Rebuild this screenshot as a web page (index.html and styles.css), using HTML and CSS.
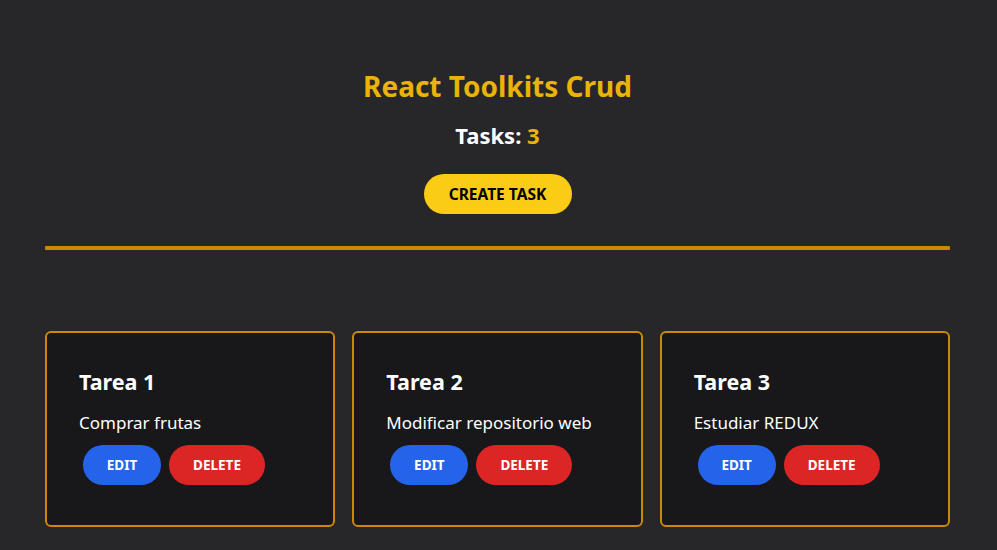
FILE: index.html
```html
<!DOCTYPE html>
<html>
<head>
<meta charset="utf-8">
<link rel="stylesheet" href="styles.css">
</head>
<body>
<div class="page">
  <header class="header">
    <h1 class="title">React Toolkits Crud</h1>
    <h2 class="count">Tasks: <span class="num">3</span></h2>
    <button class="create">CREATE TASK</button>
  </header>
  <hr class="divider">
  <section class="grid">
    <div class="card">
      <h3 class="card-title">Tarea 1</h3>
      <p class="card-desc">Comprar frutas</p>
      <div class="actions"><button class="btn edit">EDIT</button><button class="btn delete">DELETE</button></div>
    </div>
    <div class="card">
      <h3 class="card-title">Tarea 2</h3>
      <p class="card-desc">Modificar repositorio web</p>
      <div class="actions"><button class="btn edit">EDIT</button><button class="btn delete">DELETE</button></div>
    </div>
    <div class="card">
      <h3 class="card-title">Tarea 3</h3>
      <p class="card-desc">Estudiar REDUX</p>
      <div class="actions"><button class="btn edit">EDIT</button><button class="btn delete">DELETE</button></div>
    </div>
  </section>
</div>
</body>
</html>
```
FILE: styles.css
```css
* { box-sizing: border-box; }
html, body { margin: 0; padding: 0; }
body {
  background: #27272a;
  font-family: "Noto Sans", "Open Sans", sans-serif;
  color: #fff;
}
.page {
  padding: 64px 47px 0 45px;
}
.header {
  display: flex;
  flex-direction: column;
  align-items: center;
}
.title {
  margin: 0;
  font-size: 28px;
  line-height: 44px;
  font-weight: 700;
  color: #eab308;
}
.count {
  margin: 12px 0 0;
  font-size: 22px;
  line-height: 30px;
  font-weight: 700;
  color: #fff;
}
.num { color: #eab308; }
.create {
  margin-top: 24px;
  width: 148px;
  height: 40px;
  border: none;
  border-radius: 20px;
  background: #facc15;
  color: #000;
  font-family: inherit;
  font-weight: 700;
  font-size: 15.5px;
}
.divider {
  margin: 32px 0 0;
  border: none;
  height: 4px;
  background: #ca8a04;
  border-radius: 1px;
}
.grid {
  margin-top: 81px;
  display: grid;
  grid-template-columns: repeat(3, 1fr);
  gap: 17px;
}
.card {
  background: #18181b;
  border: 2px solid #ca8a04;
  border-radius: 6px;
  padding: 33px 32px 37px;
  height: 196px;
}
.card-title {
  margin: 0;
  font-size: 21.5px;
  line-height: 32px;
  font-weight: 700;
}
.card-desc {
  margin: 12px 0 0;
  font-size: 17px;
  line-height: 26px;
}
.actions {
  display: flex;
  margin-top: 5px;
}
.btn {
  margin: 4px;
  height: 40px;
  border: none;
  border-radius: 20px;
  color: #fff;
  font-family: inherit;
  font-weight: 700;
  font-size: 13.5px;
}
.edit { background: #2563eb; width: 78px; }
.delete { background: #dc2626; width: 96px; }
```
